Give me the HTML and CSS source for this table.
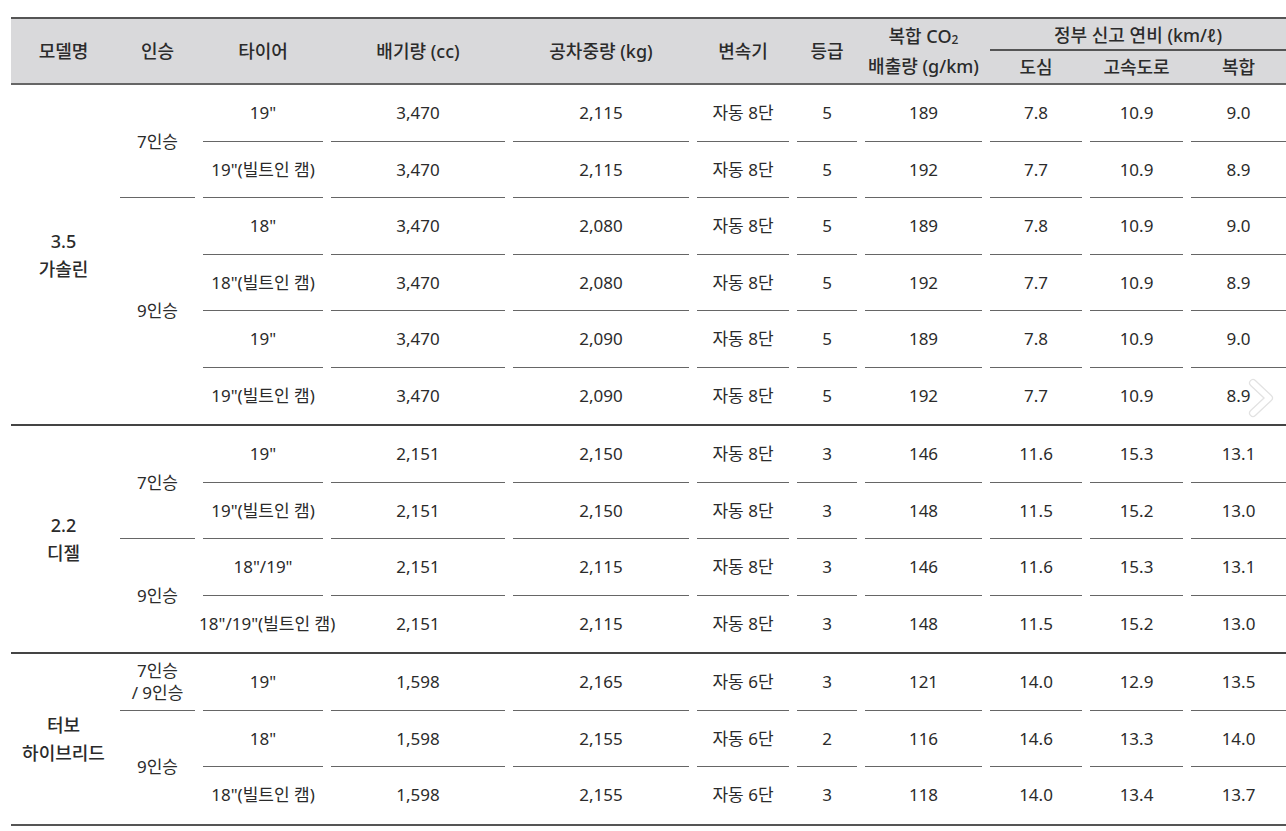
FILE: index.html
```html
<!DOCTYPE html>
<html lang="ko">
<head>
<meta charset="utf-8">
<link rel="stylesheet" href="styles.css">
</head>
<body>
<div class="wrap">
<table class="spec">
  <colgroup>
    <col style="width:105px"><col style="width:83px"><col style="width:128px"><col style="width:182px"><col style="width:184px"><col style="width:100px"><col style="width:68px"><col style="width:125px"><col style="width:100px"><col style="width:101px"><col style="width:103px">
  </colgroup>
  <thead>
    <tr class="h1">
      <th rowspan="2">모델명</th>
      <th rowspan="2">인승</th>
      <th rowspan="2">타이어</th>
      <th rowspan="2">배기량 (cc)</th>
      <th rowspan="2">공차중량 (kg)</th>
      <th rowspan="2">변속기</th>
      <th rowspan="2">등급</th>
      <th rowspan="2" class="two">복합 CO<span class="sub">2</span><br>배출량 (g/km)</th>
      <th colspan="3" class="grp">정부 신고 연비 (km/ℓ)</th>
    </tr>
    <tr class="h2">
      <th>도심</th>
      <th>고속도로</th>
      <th>복합</th>
    </tr>
  </thead>
  <tbody>
    <tr><td rowspan="6" class="model">3.5<br>가솔린</td><td rowspan="2">7인승</td><td>19"</td><td>3,470</td><td>2,115</td><td>자동 8단</td><td>5</td><td>189</td><td>7.8</td><td>10.9</td><td>9.0</td></tr>
    <tr><td>19"(빌트인 캠)</td><td>3,470</td><td>2,115</td><td>자동 8단</td><td>5</td><td>192</td><td>7.7</td><td>10.9</td><td>8.9</td></tr>
    <tr><td rowspan="4" class="end">9인승</td><td>18"</td><td>3,470</td><td>2,080</td><td>자동 8단</td><td>5</td><td>189</td><td>7.8</td><td>10.9</td><td>9.0</td></tr>
    <tr><td>18"(빌트인 캠)</td><td>3,470</td><td>2,080</td><td>자동 8단</td><td>5</td><td>192</td><td>7.7</td><td>10.9</td><td>8.9</td></tr>
    <tr><td>19"</td><td>3,470</td><td>2,090</td><td>자동 8단</td><td>5</td><td>189</td><td>7.8</td><td>10.9</td><td>9.0</td></tr>
    <tr><td>19"(빌트인 캠)</td><td>3,470</td><td>2,090</td><td>자동 8단</td><td>5</td><td>192</td><td>7.7</td><td>10.9</td><td>8.9</td></tr>
  </tbody>
  <tbody>
    <tr><td rowspan="4" class="model">2.2<br>디젤</td><td rowspan="2">7인승</td><td>19"</td><td>2,151</td><td>2,150</td><td>자동 8단</td><td>3</td><td>146</td><td>11.6</td><td>15.3</td><td>13.1</td></tr>
    <tr><td>19"(빌트인 캠)</td><td>2,151</td><td>2,150</td><td>자동 8단</td><td>3</td><td>148</td><td>11.5</td><td>15.2</td><td>13.0</td></tr>
    <tr><td rowspan="2" class="end">9인승</td><td>18"/19"</td><td>2,151</td><td>2,115</td><td>자동 8단</td><td>3</td><td>146</td><td>11.6</td><td>15.3</td><td>13.1</td></tr>
    <tr><td>18"/19"(빌트인 캠)</td><td>2,151</td><td>2,115</td><td>자동 8단</td><td>3</td><td>148</td><td>11.5</td><td>15.2</td><td>13.0</td></tr>
  </tbody>
  <tbody>
    <tr><td rowspan="3" class="model">터보<br>하이브리드</td><td class="seat2">7인승<br>/ 9인승</td><td>19"</td><td>1,598</td><td>2,165</td><td>자동 6단</td><td>3</td><td>121</td><td>14.0</td><td>12.9</td><td>13.5</td></tr>
    <tr><td rowspan="2" class="end">9인승</td><td>18"</td><td>1,598</td><td>2,155</td><td>자동 6단</td><td>2</td><td>116</td><td>14.6</td><td>13.3</td><td>14.0</td></tr>
    <tr><td>18"(빌트인 캠)</td><td>1,598</td><td>2,155</td><td>자동 6단</td><td>3</td><td>118</td><td>14.0</td><td>13.4</td><td>13.7</td></tr>
  </tbody>
</table>
<svg class="chev" width="30" height="44" viewBox="0 0 30 44" aria-hidden="true">
  <path d="M6 5 L22 20 L6 35" fill="none" stroke="#e2e2e2" stroke-width="8" stroke-linecap="round" stroke-linejoin="round"/>
  <path d="M6 5 L22 20 L6 35" fill="none" stroke="#ffffff" stroke-width="5.5" stroke-linecap="round" stroke-linejoin="round"/>
</svg>
</div>
</body>
</html>
```

FILE: styles.css
```css
html, body {
  margin: 0;
  padding: 0;
  background: #ffffff;
  overflow: hidden;
}
body {
  font-family: "Noto Sans", "Noto Sans CJK KR", sans-serif;
  color: #2b2b2b;
  font-size: 17px;
}
.wrap {
  position: relative;
  width: 1279px;
  padding: 17px 0 0 11px;
}
.spec {
  width: 1279px;
  border-collapse: collapse;
  table-layout: fixed;
}
.spec thead {
  border-top: 2px solid #555;
  border-bottom: 2px solid #666;
}
.spec th {
  background: #d9d9db;
  font-weight: 500;
  font-size: 18px;
  color: #2b2b2b;
  padding: 0;
  height: 32px;
  line-height: 24px;
  text-align: center;
  white-space: nowrap;
}
.spec th.two {
  line-height: 26px;
}
.spec .sub {
  font-size: 12px;
  vertical-align: -1px;
}
.spec th.grp {
  background-image: linear-gradient(#555, #555);
  background-repeat: no-repeat;
  background-size: calc(100% - 4px) 2px;
  background-position: right bottom;
}
.spec tbody + tbody {
  border-top: 2px solid #444;
}
.spec tbody:last-child {
  border-bottom: 2px solid #555;
}
.spec td {
  height: 56.5px;
  padding: 0;
  text-align: center;
  line-height: 22px;
  white-space: nowrap;
  background-image: linear-gradient(#666, #666);
  background-repeat: no-repeat;
  background-size: calc(100% - 8px) 1px;
  background-position: center bottom;
}
.spec tbody tr:last-child td,
.spec td.model,
.spec td.end {
  background-image: none;
}
.spec td.model {
  font-weight: 500;
  font-size: 18px;
  line-height: 28px;
}
.spec td.seat2 {
  line-height: 22px;
}
.chev {
  position: absolute;
  left: 1247px;
  top: 378px;
}
```
